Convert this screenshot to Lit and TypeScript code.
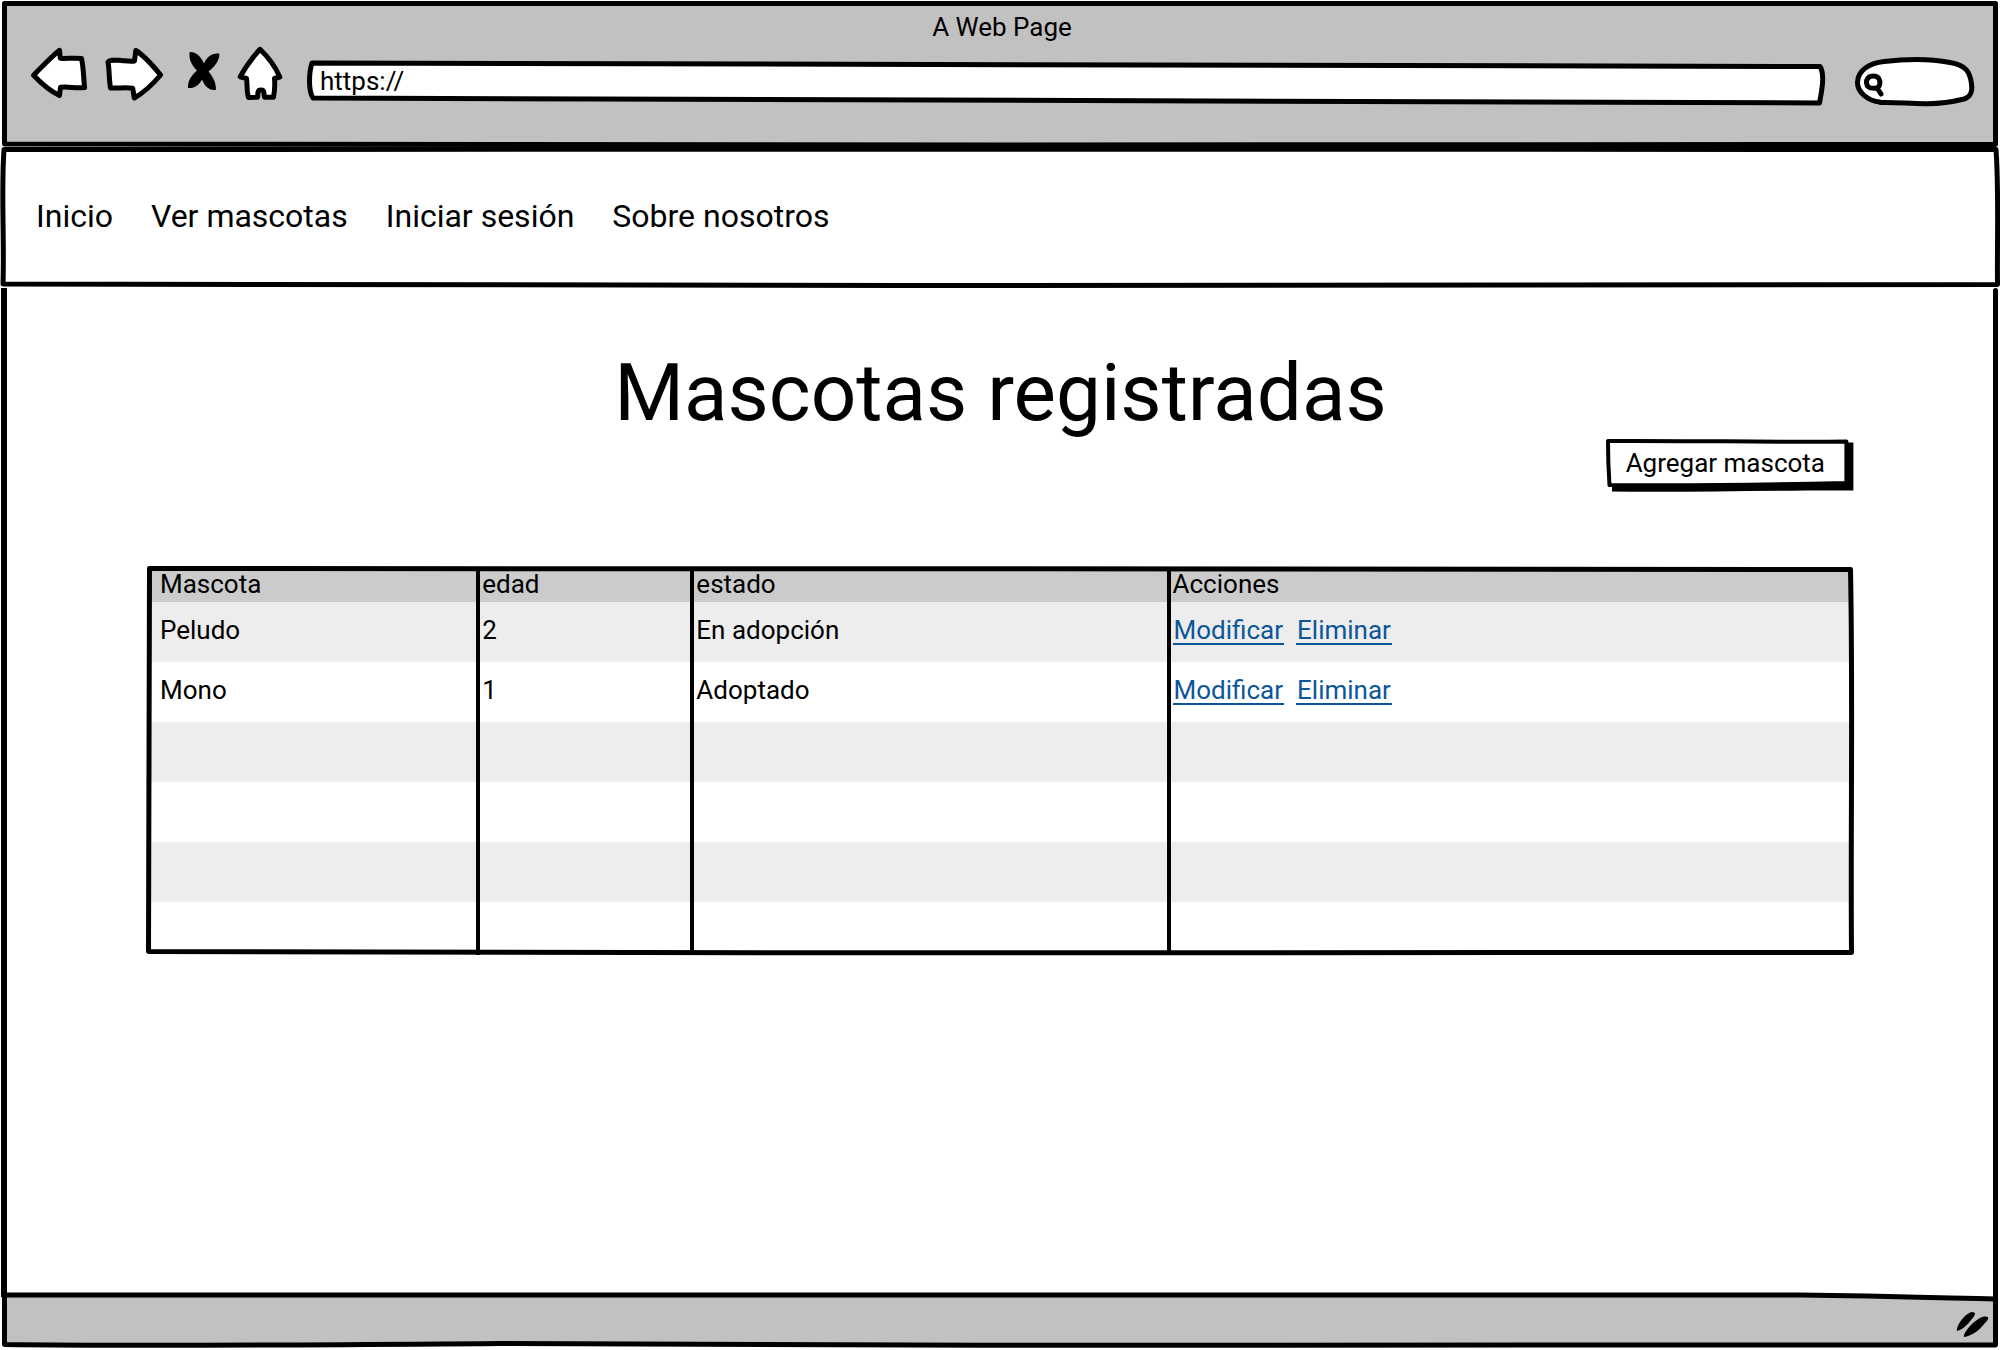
import { LitElement, html, css, svg } from "lit";
import { customElement, state } from "lit/decorators.js";

interface Pet {
  name: string;
  age: string;
  status: string;
}

const LINKS = ["Inicio", "Ver mascotas", "Iniciar sesión", "Sobre nosotros"];

const PETS: Pet[] = [
  { name: "Peludo", age: "2", status: "En adopción" },
  { name: "Mono", age: "1", status: "Adoptado" },
];

const BLANK_ROWS = 4;

/** Stretches a hand-drawn outline over the box that holds it. */
const frame = (viewBox: string, content: unknown) => html`
  <svg class="frame" viewBox=${viewBox} preserveAspectRatio="none" aria-hidden="true">${content}</svg>
`;

const icons = {
  back: html`<svg class="icon" width="58" height="56" viewBox="30 46 58 56" aria-hidden="true">
    <path class="fill" d="M33.5 75.2 C40 69 51 57 59.5 50.3 L60.3 58.3 C66 58.8 75 57.5 81.5 58.5 C83.5 67 83.5 78 84.6 87.5 C76 88.3 68 86.5 60.5 87.3 L59.5 95.5 C50 91 41 83 33.5 75.2Z"/></svg>`,
  forward: html`<svg class="icon" width="62" height="56" viewBox="104 46 62 56" aria-hidden="true">
    <path class="fill" d="M108 62 C110 59.5 115 60.2 121 60.5 C127 61 131 61.5 134.5 61 L135.8 50.5 C145 56 154 67 160.6 75 C153 84 143 93 134.3 98 L132.7 88.2 C126 87 118 88.5 110.5 88 C109 80 109.5 70 108 62Z"/></svg>`,
  stop: html`<svg class="icon" width="38" height="56" viewBox="182 46 38 56" aria-hidden="true">
    <path d="M189.7 52 C195 51.5 201 56 204 63.5 C207 57 212 52.5 219.4 53.8 C219.5 61 214.5 67 208.5 71.5 C213 77 216.5 83 215.8 90 C208 90.5 204 85 202.2 79.5 C199 85 194 88.8 188 88 C187.5 80 192 75 197 70.5 C191.5 65 188.5 59 189.7 52Z"/></svg>`,
  home: html`<svg class="icon" width="50" height="56" viewBox="236 46 50 56" aria-hidden="true">
    <path class="fill" d="M260 49.3 C266 55 275 66 279.8 77 L274.5 78.5 C275 85 274.8 91 273.5 97.3 L264.5 97.3 C263.5 94 265 89.7 261 90 C256.5 89.7 258.5 94 257.5 97.2 L248.5 97.6 C246.5 91 247.5 85 246.5 78.5 L240.2 76.8 C245 68 252 58 260 49.3Z"/></svg>`,
};

@customElement("app-root")
export class AppRoot extends LitElement {
  @state() private url = "https://";

  static styles = css`
    :host {
      display: flex;
      flex-direction: column;
      min-height: 100vh;
      background: #fff;
      color: #000;
      font: 26px/26px Roboto, "Liberation Sans", sans-serif;
    }

    * {
      box-sizing: border-box;
    }

    .frame {
      position: absolute;
      inset: 0;
      width: 100%;
      height: 100%;
      overflow: visible;
      pointer-events: none;
    }

    .frame path,
    .icon .fill {
      fill: none;
      stroke: #000;
      stroke-width: 5px;
      stroke-linejoin: round;
      stroke-linecap: round;
      vector-effect: non-scaling-stroke;
    }

    .frame .grey {
      fill: #c1c1c1;
    }

    .frame .white,
    .icon .fill {
      fill: #fff;
    }

    .frame .thin {
      stroke-width: 4px;
    }

    .frame .side {
      stroke-width: 6px;
      stroke-linecap: butt;
    }

    .frame .solid {
      fill: #000;
      stroke: none;
    }

    .icon {
      display: block;
      overflow: visible;
    }

    a,
    button,
    input {
      font: inherit;
      color: inherit;
    }

    button,
    input {
      appearance: none;
      margin: 0;
      border: 0;
      padding: 0;
      background: none;
      outline-offset: 4px;
    }

    button {
      cursor: pointer;
    }

    .browser {
      position: relative;
      height: 148px;
      padding: 8px 26px 0 30px;
    }

    .page-title {
      position: relative;
      line-height: 38px;
      text-align: center;
    }

    .toolbar {
      position: relative;
      display: flex;
      align-items: flex-start;
      gap: 20px;
    }

    .controls {
      display: flex;
      gap: 16px;
    }

    .field {
      position: relative;
      height: 46px;
      margin-top: 12px;
    }

    .field input {
      position: relative;
      width: 100%;
      height: 100%;
    }

    .address {
      flex: 1;
      margin-right: 8px;
    }

    .address input {
      padding: 0 14px;
    }

    .search {
      width: 120px;
    }

    .search input {
      padding: 0 12px 0 30px;
    }

    .site-nav {
      position: relative;
      display: flex;
      align-items: center;
      gap: 38px;
      height: 140px;
      padding: 0 36px 4px;
      font-size: 32px;
      line-height: 40px;
    }

    .site-nav a {
      position: relative;
      text-decoration: none;
    }

    .content {
      position: relative;
      flex: 1;
      padding: 60px 147px 60px 148px;
    }

    h1 {
      margin: 0;
      font-size: 80px;
      font-weight: 400;
      line-height: 90px;
      text-align: center;
    }

    .actions {
      display: flex;
      justify-content: flex-end;
      margin-bottom: 76px;
    }

    .add {
      position: relative;
      height: 54px;
      padding: 0 28px 4px 22px;
    }

    .add span {
      position: relative;
    }

    .grid {
      position: relative;
    }

    table {
      width: 100%;
      table-layout: fixed;
      border-spacing: 0;
    }

    .col-name {
      width: 19.25%;
    }

    .col-age {
      width: 12.56%;
    }

    .col-status {
      width: 27.93%;
    }

    th,
    td {
      border-left: 4px solid #000;
      padding: 0 0 4px 2px;
      text-align: left;
      font-weight: 400;
    }

    th:first-child,
    td:first-child {
      border-left: 0;
      padding-left: 12px;
    }

    th {
      height: 34px;
      padding-bottom: 2px;
      background: #cbcbcb;
    }

    td {
      height: 60px;
    }

    tbody tr:nth-child(odd) {
      background: #ededed;
    }

    tbody tr:last-child td {
      height: 53px;
    }

    .links {
      display: flex;
      gap: 12px;
    }

    .links a {
      border-bottom: 2px solid #0b5699;
      padding: 0 1px;
      margin-bottom: -2px;
      color: #0b5699;
      line-height: 25px;
      text-decoration: none;
    }

    .status {
      position: relative;
      display: flex;
      justify-content: flex-end;
      height: 55px;
      padding: 13px 10px;
    }

    .status .icon {
      position: relative;
    }
  `;

  private renderBrowser() {
    return html`
      <header class="browser">
        ${frame(
          "0 0 2000 148",
          svg`<path class="grey" d="M4.5 3.5 H1995.5 V144.5 C1300 144.5 700 146 4.5 144 Z" />`
        )}
        <div class="page-title">A Web Page</div>
        <div class="toolbar">
          <div class="controls">
            <button type="button" aria-label="Atrás">${icons.back}</button>
            <button type="button" aria-label="Adelante">${icons.forward}</button>
            <button type="button" aria-label="Detener">${icons.stop}</button>
            <button type="button" aria-label="Página principal">${icons.home}</button>
          </div>
          <div class="field address">
            ${frame(
              "306 58 1520 46",
              svg`<path class="white" d="M312 63 C800 62.5 1300 65 1820 66.5 C1825 74 1822 90 1819.5 103 C1300 103 800 100.5 313 98 C308 90 309 72 312 63Z" />`
            )}
            <input
              type="text"
              aria-label="Dirección"
              .value=${this.url}
              @input=${(e: Event) => (this.url = (e.target as HTMLInputElement).value)}
            />
          </div>
          <div class="field search">
            ${frame(
              "1854 58 120 46",
              svg`<path class="white" d="M1880 102 C1868 101 1857 92 1857.5 82 C1858 70 1870 63 1884 61.5 C1905 59 1930 58.5 1950 62.5 C1966 65 1970 72 1971.5 84 C1973 93 1969 97.5 1964 99 C1950 102.5 1940 104 1925 103.7 C1908 103.5 1895 102 1880 102.5Z" />
              <path d="M1873.5 76 C1868 76 1866 80 1866.5 83 C1867 87.5 1870 88.5 1875 88.3 C1879.5 88 1880.3 84 1879.8 81 C1879 77.5 1877 76 1873.5 76Z M1877.5 88.5 L1881 94" />`
            )}
            <input type="text" aria-label="Buscar" />
          </div>
        </div>
      </header>
    `;
  }

  private renderTable() {
    return html`
      <div class="grid">
        <table>
          <colgroup>
            <col class="col-name" />
            <col class="col-age" />
            <col class="col-status" />
            <col />
          </colgroup>
          <thead>
            <tr>
              <th scope="col">Mascota</th>
              <th scope="col">edad</th>
              <th scope="col">estado</th>
              <th scope="col">Acciones</th>
            </tr>
          </thead>
          <tbody>
            ${PETS.map(
              (pet) => html`
                <tr>
                  <td>${pet.name}</td>
                  <td>${pet.age}</td>
                  <td>${pet.status}</td>
                  <td>
                    <div class="links"><a href="#modificar">Modificar</a><a href="#eliminar">Eliminar</a></div>
                  </td>
                </tr>
              `
            )}
            ${Array.from(
              { length: BLANK_ROWS },
              () => html`<tr><td></td><td></td><td></td><td></td></tr>`
            )}
          </tbody>
        </table>
        ${frame(
          "148 568 1705 387",
          svg`<path d="M149.5 568.5 C700 569 1300 568.5 1850.5 569.5 C1853 690 1850.5 830 1851.5 952.5 C1400 952 700 954 148.5 951.5 C148 830 150 690 149.5 568.5Z" />`
        )}
      </div>
    `;
  }

  render() {
    return html`
      ${this.renderBrowser()}
      <nav class="site-nav">
        ${frame(
          "0 148 2000 140",
          svg`<path class="white" d="M4 149.5 C700 148.5 1300 149.5 1996 149.5 C1999 190 1997 240 1997.5 284.5 C1500 284 1200 286 900 285.5 C600 284 300 284.5 3 284 C4.5 240 1 190 4 149.5Z" />`
        )}
        ${LINKS.map((label) => html`<a href="#">${label}</a>`)}
      </nav>
      <main class="content">
        ${frame(
          "0 288 2000 1007",
          svg`<path class="side" d="M4 288 V1297" /><path d="M1995.5 290.5 V1298" />`
        )}
        <h1>Mascotas registradas</h1>
        <div class="actions">
          <button class="add" type="button">
            ${frame(
              "1604 438 250 54",
              svg`<path class="solid" d="M1612 444 L1854 442.5 L1854 490.5 C1780 490 1690 492.5 1612 491.5Z" />
              <path class="white thin" d="M1608 441 C1690 440.5 1780 442.5 1847 441.5 V483 C1780 484.5 1690 486 1609.5 485 C1608.5 470 1608 455 1608 441Z" />`
            )}
            <span>Agregar mascota</span>
          </button>
        </div>
        ${this.renderTable()}
      </main>
      <footer class="status">
        ${frame(
          "0 1295 2000 55",
          svg`<path class="grey" d="M4.5 1295 C500 1297 1000 1294 1800 1295 C1880 1296 1930 1297.5 1995.5 1299 V1345 C1400 1348 1000 1345 500 1343.5 C300 1345 150 1346.5 4.5 1344.5 Z" />`
        )}
        <svg class="icon" width="40" height="32" viewBox="1950 1308 40 32" aria-hidden="true">
          <path d="M1957 1331 C1956 1326 1965 1313 1972 1312 C1977 1312 1975 1316 1971 1320 C1967 1326 1961 1330 1957 1331Z" />
          <path d="M1964 1337 C1963 1332 1976 1318 1984 1316.5 C1990 1316 1989 1319 1985 1323 C1979 1331 1971 1336 1964 1337Z" />
        </svg>
      </footer>
    `;
  }
}
